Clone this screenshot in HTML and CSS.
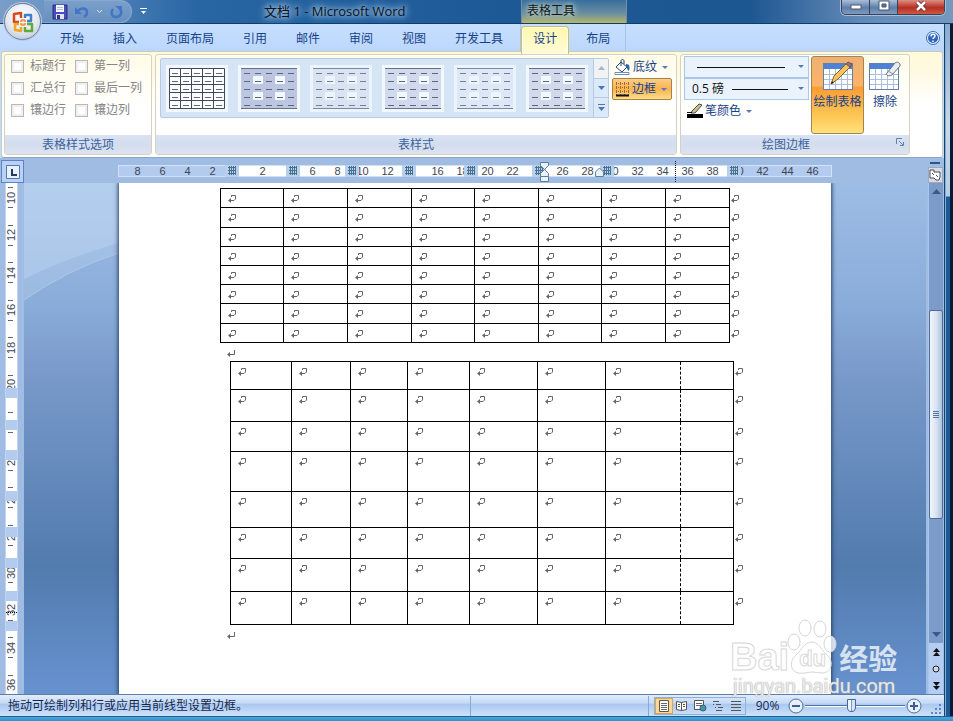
FILE: index.html
```html
<!DOCTYPE html>
<html lang="zh-CN">
<head>
<meta charset="utf-8">
<title>文档 1 - Microsoft Word</title>
<link rel="stylesheet" href="styles.css">
</head>
<body>
<svg class="defs" aria-hidden="true">
  <defs>
    <symbol id="cell-mark" viewBox="0 0 8 8"><path d="M3.500 2V.5h4V4L6 5.500H1" /><path d="M0 5.500L3 3v5z" fill="#666" stroke="none" /></symbol>
    <symbol id="para-mark" viewBox="0 0 8 8"><path d="M7.500 1v4.500H1" /><path d="M0 5.500L3 3v5z" fill="#666" stroke="none" /></symbol>
    <symbol id="grip" viewBox="0 0 8 9"><path d="M1.500 0v9M3.500 0v9M5.500 0v9M7.500 0v9M0 1.500h8M0 4.500h8M0 7.500h8" stroke="#47718c" stroke-width="1" /></symbol>
    <pattern id="dash-cells" width="11" height="8" patternUnits="userSpaceOnUse"><path d="M3 5.500h6" stroke="#5b6980" /></pattern>
    <symbol id="style-grid" viewBox="0 0 56 41">
      <rect width="56" height="41" fill="#fff" /><rect width="56" height="41" fill="url(#dash-cells)" />
      <path d="M.5 .5h55v40H.5zM11.500 0v41M22.500 0v41M33.500 0v41M44.500 0v41M0 8.500h56M0 16.500h56M0 24.500h56M0 32.500h56" fill="none" stroke="#3d4a5c" />
    </symbol>
    <symbol id="style-band" viewBox="0 0 56 41">
      <rect width="56" height="41" fill="currentColor" />
      <path d="M12 8h10v8H12zM34 8h10v8H34zM12 24h10v8H12zM34 24h10v8H34z" fill="#f2f8ff" />
      <rect width="56" height="41" fill="url(#dash-cells)" />
      <path d="M0 .5h56M0 40.500h56" stroke="#65728c" />
    </symbol>
    <symbol id="table-pic" viewBox="0 0 30 27">
      <rect x=".5" y=".5" width="29" height="26" fill="#fff" stroke="#5f7fae" />
      <rect x="1" y="1" width="28" height="5" fill="#4e82d6" />
      <path d="M6.500 6v20M12.500 6v20M18.500 6v20M24.500 6v20M1 11.500h28M1 16.500h28M1 21.500h28" stroke="#a9bfdf" />
    </symbol>
  </defs>
</svg>

<header class="titlebar">
  <div class="quick">
    <button aria-label="保存"><svg width="16" height="16" viewBox="0 0 16 16"><path d="M1 1h14v14H1z" fill="#4a4db5" stroke="#2b2d7c" /><path d="M4 1h8v7H4z" fill="#f3f6ff" /><path d="M5 3.500h6M5 5.500h6" stroke="#b5bde0" /><path d="M4 10h8v5H4z" fill="#dfe3f5" /><path d="M5 11h3v4H5z" fill="#333689" /></svg></button>
    <button aria-label="撤消"><svg width="16" height="14" viewBox="0 0 16 14"><path d="M4 6c3-4 9-3 9 1 0 2-1 4-3 5" fill="none" stroke="#4474c8" stroke-width="2.500" /><path d="M1 2v7h7z" fill="#4474c8" /></svg></button>
    <svg class="chev" width="7" height="5" viewBox="0 0 7 5"><path d="M1 1l2.500 2.500L6 1" fill="none" stroke="#dce9f8" /></svg>
    <button aria-label="重复"><svg width="15" height="14" viewBox="0 0 15 14"><path d="M4 4c-3 4-1 8 3 8s7-4 4-8" fill="none" stroke="#4474c8" stroke-width="2.500" /><path d="M6 1h7v6z" fill="#4474c8" /></svg></button>
  </div>
  <button class="customize" aria-label="自定义快速访问工具栏"><svg width="7" height="7" viewBox="0 0 7 7"><path d="M0 .5h7" stroke="#fff" /><path d="M1 3h5L3.500 6z" fill="#fff" /></svg></button>
  <h1>文档 1 - Microsoft Word</h1>
  <div class="context-title">表格工具</div>
  <div class="window-buttons">
    <button aria-label="最小化"><svg width="12" height="12"><path d="M1 5h10v4H1z" fill="#fff" stroke="#4b5870" /></svg></button>
    <button aria-label="还原"><svg width="12" height="12"><path d="M1 1h10v9H1z" fill="#fff" stroke="#4b5870" /><path d="M4 4h4v3H4z" fill="#53749c" stroke="#4b5870" /></svg></button>
    <button class="close" aria-label="关闭"><svg width="14" height="12" viewBox="0 0 14 12"><path d="M3 2l8 8M11 2l-8 8" stroke="#5b2328" stroke-width="4" /><path d="M3 2l8 8M11 2l-8 8" stroke="#fff" stroke-width="2.500" /></svg></button>
  </div>
</header>
<button class="office" aria-label="Office 按钮"><svg width="24" height="24" viewBox="0 0 24 24" fill="none" stroke-width="2.500" stroke-linejoin="round"><path d="M10 8V3L3 4v8h5" stroke="#d9481c" /><path d="M14 8V5h6v6h-4" stroke="#3f80c9" /><path d="M8 14H4v6l6 1v-4" stroke="#f2a51d" /><path d="M16 14h5v7h-7v-4" stroke="#62a83b" /><path d="M9 11h2V9M13 9v2h2M9 14h2v2M15 14h-2v2" stroke="#ee8a35" stroke-width="1.500" /></svg></button>

<div class="frame">
<main>
  <nav class="tabs">
    <button>开始</button><button>插入</button><button>页面布局</button><button>引用</button><button>邮件</button><button>审阅</button><button>视图</button><button>开发工具</button>
    <div class="context-tabs"><button class="active">设计</button><button>布局</button></div>
    <button class="help" aria-label="帮助"><svg width="14" height="14" viewBox="0 0 14 14"><circle cx="7" cy="7" r="6.500" fill="#e8f1fd" stroke="#3d6db5" /><circle cx="7" cy="7" r="5" fill="#2c66bd" /><path d="M5 5.500c0-3 4-3 4-.5 0 1.500-2 1.500-2 3M7 9.500v1.500" fill="none" stroke="#fff" stroke-width="1.500" /></svg></button>
  </nav>

  <div class="ribbon">
    <section class="group options">
      <div class="group-body checks">
        <label><input type="checkbox">标题行</label><label><input type="checkbox">第一列</label>
        <label><input type="checkbox">汇总行</label><label><input type="checkbox">最后一列</label>
        <label><input type="checkbox">镶边行</label><label><input type="checkbox">镶边列</label>
      </div>
      <h2>表格样式选项</h2>
    </section>
    <section class="group styles">
      <div class="group-body">
        <div class="gallery">
          <button class="thumb" aria-label="网格"><svg><use href="#style-grid" /></svg></button>
          <button class="thumb t1" aria-label="样式 1"><svg><use href="#style-band" /></svg></button>
          <button class="thumb t2" aria-label="样式 2"><svg><use href="#style-band" /></svg></button>
          <button class="thumb t3" aria-label="样式 3"><svg><use href="#style-band" /></svg></button>
          <button class="thumb t4" aria-label="样式 4"><svg><use href="#style-band" /></svg></button>
          <button class="thumb t5" aria-label="样式 5"><svg><use href="#style-band" /></svg></button>
          <div class="gallery-scroll">
            <button class="off" aria-label="上一行"><svg width="7" height="4"><path d="M0 4h7L3.500 0z" fill="#aab4c2" /></svg></button>
            <button aria-label="下一行"><svg width="7" height="4"><path d="M0 0h7L3.500 4z" fill="#4b77b5" /></svg></button>
            <button aria-label="其他"><svg width="7" height="7"><path d="M0 .5h7" stroke="#4b77b5" /><path d="M0 3h7L3.500 7z" fill="#4b77b5" /></svg></button>
          </div>
        </div>
        <div class="stack">
          <button class="small"><svg width="17" height="17" viewBox="0 0 17 17"><path d="M1 13.500h14v2H1z" fill="#fff" stroke="#6e8fbd" /><path d="M7 3l6 5-5 5-6-5z" fill="#fff" stroke="#28466f" /><path d="M7 7V2c0-2 3-2 3 0v3" fill="none" stroke="#28466f" /><path d="M12 5c4 0 4 3 3 7-2-1-2-3-3-5z" fill="#2c68b4" /></svg><span>底纹</span><i class="drop"></i></button>
          <button class="small hot"><svg width="15" height="15" viewBox="0 0 15 15"><path d="M1.500 0v13M5.500 0v13M9.500 0v13M13.500 0v13M1 1.500h13M1 5.500h13M1 9.500h13" stroke="#9c6a30" stroke-dasharray="1 1" /><path d="M1 13.500h13" stroke="#111" stroke-width="2" /></svg><span>边框</span><i class="drop"></i></button>
        </div>
      </div>
      <h2>表样式</h2>
    </section>
    <section class="group borders">
      <div class="group-body">
        <div class="stack pens">
          <label class="pick"><select aria-label="笔样式"><option></option></select><span class="rule wide"></span><i class="drop"></i></label>
          <label class="pick"><select aria-label="笔划粗细"><option>0.5 磅</option></select><span class="rule"></span><i class="drop"></i></label>
          <button class="small"><svg width="17" height="16" viewBox="0 0 17 16"><path d="M1 11h16v4H1z" fill="#000" /><path d="M6 8l7-7 3 1-7 8H5z" fill="#c9c293" stroke="#4d4d42" /><path d="M1 9.500h5" stroke="#111" /></svg><span>笔颜色</span><i class="drop"></i></button>
        </div>
        <button class="large hot"><svg width="30" height="33" viewBox="0 0 30 33"><use href="#table-pic" y="5" width="30" height="27" /><path d="M8 26l3-8L24 5l4 3L15 21z" fill="#f4c35c" stroke="#85612c" /><path d="M23 6l2-2 4 2-2 3z" fill="#a66f65" stroke="#76504a" /><path d="M8 26l1-3 2 2z" fill="#222" /></svg><span>绘制表格</span></button>
        <button class="large"><svg width="32" height="33" viewBox="0 0 32 33"><use href="#table-pic" y="5" width="30" height="27" /><path d="M18 15L26 5c2-2 6 0 5 3l-8 9c-3 2-7 0-5-2z" fill="#e9edf2" stroke="#68727f" /><path d="M19 13l5 3" stroke="#8c96a3" /></svg><span>擦除</span></button>
      </div>
      <h2>绘图边框</h2>
      <button class="launcher" aria-label="边框和底纹"><svg width="8" height="8" viewBox="0 0 8 8"><path d="M.5 6V.5H6M3 3l4 4M7.500 4v3.500H4" fill="none" stroke="#6380a9" /></svg></button>
    </section>
  </div>

  <div class="workspace">
    <button class="tab-stop" aria-label="制表符"><svg width="14" height="14" viewBox="0 0 14 14"><path d="M.5 .5h13v13H.5z" fill="#e8f0fb" stroke="#5877b1" /><path d="M6 4v6h5" fill="none" stroke="#27395c" stroke-width="2" /></svg></button>
    <div class="hruler-row">
      <div class="hruler" id="hruler"></div>
    </div>
    <div class="split">
      <span class="split-bar"></span>
      <button aria-label="标尺"><svg width="12" height="12" viewBox="0 0 12 12"><path d="M1 1h4v2h6v5l-1 3H7L5 9H1z" fill="#fff" stroke="#4a4f5a" /><path d="M3 4l2 2M7 6l2 2" stroke="#4a4f5a" /></svg></button>
    </div>
    <div class="vruler" id="vruler"></div>
    <div class="canvas">
      <svg class="waves" viewBox="0 0 95 120" preserveAspectRatio="none"><path d="M0 0h95v60Q45 74 0 96z" fill="#d2e6fa" opacity=".25" /><path d="M0 0h95v70Q45 86 0 117z" fill="#cfe2f7" opacity=".25" /><path d="M0 117Q45 86 95 70" fill="none" stroke="#b6cfec" opacity=".7" /></svg>
      <article class="page">
        <table class="first" id="first"></table>
        <p><svg class="mark"><use href="#para-mark" /></svg></p>
        <table class="second" id="second"></table>
        <p><svg class="mark"><use href="#para-mark" /></svg></p>
      </article>
    </div>
    <div class="vscroll">
      <button aria-label="向上"><svg width="9" height="5"><path d="M0 5h9L4.500 0z" fill="#3b5a8c" /></svg></button>
      <div class="track"><div class="handle"></div></div>
      <button aria-label="向下"><svg width="9" height="5"><path d="M0 0h9L4.500 5z" fill="#3b5a8c" /></svg></button>
      <div class="browse">
        <button aria-label="前一页"><svg width="7" height="8"><path d="M0 4h7L3.500 0zM0 8h7L3.500 4z" fill="#111" /></svg></button>
        <button aria-label="选择浏览对象"><svg width="8" height="8"><circle cx="4" cy="4" r="3" fill="#cfdae8" stroke="#222" /></svg></button>
        <button aria-label="下一页"><svg width="7" height="8"><path d="M0 0h7L3.500 4zM0 4h7L3.500 8z" fill="#111" /></svg></button>
      </div>
    </div>
  </div>

  <footer class="status">
    <span class="message">拖动可绘制列和行或应用当前线型设置边框。</span>
    <div class="views">
      <button class="on" aria-label="页面视图"><svg width="12" height="12"><path d="M1.500 .5h9v11h-9z" fill="#fff" stroke="#555" /><path d="M3 3.500h6M3 5.500h6M3 7.500h6M3 9.500h6" stroke="#666" /></svg></button>
      <button aria-label="阅读版式"><svg width="12" height="12"><path d="M.5 1.500l5 1 5-1v8l-5 1-5-1zM5.500 2v9" fill="#fff" stroke="#555" /><path d="M2 4.500h2M2 6.500h2M7 4.500h2M7 6.500h2" stroke="#555" /></svg></button>
      <button aria-label="Web 版式"><svg width="13" height="12"><path d="M.5 .5h9v9h-9z" fill="#fff" stroke="#555" /><path d="M2 3.500h6M2 5.500h6" stroke="#666" /><circle cx="9" cy="8" r="3" fill="#4a93a0" stroke="#31607e" /></svg></button>
      <button aria-label="大纲"><svg width="12" height="12"><path d="M1 1.500h6M4 4.500h5M6 7.500h5M4 10.500h6M1 4.500h1M3 7.500h1" stroke="#555" /></svg></button>
      <button aria-label="草稿"><svg width="12" height="12"><path d="M1 1.500h10M1 4.500h10M1 7.500h10M1 10.500h10" stroke="#555" /></svg></button>
    </div>
    <button class="percent">90%</button>
    <button class="round" aria-label="缩小"><svg width="16" height="16" viewBox="0 0 16 16"><circle cx="8" cy="8" r="7" fill="#e6effb" stroke="#526f9e" /><path d="M4 8h8" stroke="#3e5c90" stroke-width="2" /></svg></button>
    <input type="range" min="0" max="100" value="46" aria-label="显示比例">
    <button class="round" aria-label="放大"><svg width="16" height="16" viewBox="0 0 16 16"><circle cx="8" cy="8" r="7" fill="#e6effb" stroke="#526f9e" /><path d="M4 8h8M8 4v8" stroke="#3e5c90" stroke-width="2" /></svg></button>
    <svg class="size-grip" width="12" height="12"><path d="M8 1h2v2H8zM4 5h2v2H4zM8 5h2v2H8zM0 9h2v2H0zM4 9h2v2H4zM8 9h2v2H8z" fill="#5f84bd" /></svg>
  </footer>
</main>
<div class="edge"></div>
</div>
<div class="taskbar"></div>

<div class="watermark">
  <div class="brand"><span class="latin">Bai</span>
    <span class="paw"><svg viewBox="0 0 50 56"><g class="shape"><ellipse cx="7" cy="23" rx="6" ry="8" /><ellipse cx="18" cy="9" rx="6" ry="8" /><ellipse cx="33" cy="10" rx="6" ry="8" /><ellipse cx="43" cy="25" rx="6" ry="8" /><path d="M25 23c7 0 9 8 15 13 7 6 5 17-4 18-4 0-7-1-11-1s-8 2-13 1C3 53 2 42 9 36c6-5 8-13 16-13z" /></g></svg><b>du</b></span>
    <span class="hanzi">经验</span></div>
  <div class="site">jingyan.baidu.com</div>
</div>
<script src="app.js"></script>
</body>
</html>
```
FILE: styles.css
```css
* { box-sizing: border-box; }
body {
  margin: 0;
  height: 100vh;
  display: flex;
  flex-direction: column;
  overflow: hidden;
  position: relative;
  font: 12px/16px "Open Sans", "Noto Sans CJK SC", sans-serif;
  color: #15428b;
  background: #1d5a96;
}
button, select { font: inherit; color: inherit; border: 0; padding: 0; margin: 0; background: none; }
button { display: flex; align-items: center; justify-content: center; white-space: nowrap; }
svg { display: block; flex: none; }
.defs { position: absolute; width: 0; height: 0; }

.titlebar {
  flex: 0 0 24px;
  display: flex;
  align-items: flex-start;
  position: relative;
  padding: 0 8px 0 44px;
  border-bottom: 1px solid #0f3c6c;
  background: linear-gradient(90deg, #789dc8 0, #6c95c4 50px, #3b73ae 150px, #2765a3 200px, #1d5995 500px, #1d5791 750px, #6289b7 860px, #7698bd 100%);
}
.quick {
  display: flex;
  align-items: center;
  gap: 6px;
  width: 88px;
  height: 23px;
  padding-left: 8px;
  border: 1px solid #86a8cf;
  border-width: 1px 1px 1px 0;
  border-radius: 0 12px 12px 0;
  background: linear-gradient(#7b9fca, #6790c0);
}
.customize { width: 22px; height: 23px; }
h1 {
  margin: 0 0 0 110px;
  width: 146px;
  font: 13px/22px "Open Sans", "Noto Sans CJK SC", sans-serif;
  color: #0c1420;
  white-space: nowrap;
  text-shadow: 0 0 5px #a9c6e6, 0 0 8px #a9c6e6, 0 0 10px #a9c6e6;
}
.context-title {
  margin-left: 111px;
  width: 106px;
  height: 23px;
  padding-left: 5px;
  line-height: 22px;
  color: #10151a;
  border-left: 1px solid #718fa5;
  border-right: 1px solid #718fa5;
  background: linear-gradient(#376e9f, #6b909e 60%, #b9b766);
  text-shadow: 0 0 5px #d4e1d2, 0 0 8px #d4e1d2;
}
.window-buttons {
  display: flex;
  margin-left: auto;
  height: 15px;
  border: 1px solid #34435b;
  border-top: 0;
  border-radius: 0 0 5px 5px;
  box-shadow: 0 0 0 1px #a9bdd6;
  overflow: hidden;
}
.window-buttons button { width: 28px; padding-bottom: 3px; background: linear-gradient(#a9bed8, #5d7ea8 55%, #7d9cc2); border-right: 1px solid #34435b; }
.window-buttons .close { width: 46px; border: 0; background: linear-gradient(#dd8f83, #b52f24 55%, #d2583e); }
.office {
  position: absolute;
  left: 4px;
  top: 3px;
  z-index: 2;
  width: 37px;
  height: 37px;
  border-radius: 50%;
  border: 1px solid #7183a0;
  background: radial-gradient(circle at 50% 35%, #fff, #e3e8f0 55%, #a9b7cc);
  box-shadow: 0 0 0 1px #b6cbe5;
}

.frame { flex: 1; min-height: 0; display: flex; }
main { flex: 1; min-width: 0; display: flex; flex-direction: column; background: #bfdbff; }
.edge {
  flex: 0 0 9px;
  border-left: 1px solid #15406f;
  border-right: 3px solid #061c38;
  background: linear-gradient(90deg, #82acd3 1px, transparent 1px), linear-gradient(#8babcf 0, #c9d8e7 100px, #b6cfe2 172px, #1c5995 173px);
}
.taskbar { flex: 0 0 5px; background: linear-gradient(#235c92 1px, #4aa7db 1px, #3194d0); }

.tabs { flex: 0 0 27px; min-height: 0; display: flex; gap: 5px; padding: 0 4px 0 48px; background: linear-gradient(#c7dfff, #bcd7fc); }
.tabs button { height: 28px; padding: 1px 12px 0; }
.context-tabs { display: flex; gap: 5px; height: 27px; padding: 2px 3px 0 0; border: 1px solid #a9c4e4; border-width: 0 1px; }
.context-tabs button { height: 26px; padding-bottom: 1px; }
.tabs .active { position: relative; z-index: 1; height: 28px; border: 1px solid #cbbf75; border-bottom: 0; border-radius: 4px 4px 0 0; padding: 0 11px 4px; background: linear-gradient(#fff8b0, #fffbd6); box-shadow: inset 0 0 0 1px #fffde8; }
.tabs .help { margin-left: auto; padding: 0; }

.ribbon {
  flex: 0 0 107px;
  display: flex;
  gap: 3px;
  padding: 2px 1px 2px 2px;
  margin: 0 1px;
  border: 1px solid #c9cbc0;
  border-bottom-color: #8ba6ca;
  border-radius: 3px;
  background: linear-gradient(#fffbd8, #fff9e3 20%, #fff 50%);
}
.group {
  position: relative;
  display: flex;
  flex-direction: column;
  border: 1px solid #d5d2c2;
  border-radius: 3px;
  background: linear-gradient(#fffbe4, #fffdf2 20%, #fff 60%);
  box-shadow: inset 0 0 0 1px #fffef7;
}
.options { width: 148px; }
.styles { width: 522px; }
.borders { width: 230px; }
.group-body { flex: 1; display: flex; }
.group h2 { flex: 0 0 19px; margin: 0; font: inherit; line-height: 19px; text-align: center; color: #3b62a0; background: linear-gradient(#d9e3f4, #d3dded 50%, #dde3ef); }
.borders h2 { padding-right: 18px; }
.checks { display: grid; grid-template-columns: 64px 1fr; grid-auto-rows: 22px; padding: 0 0 0 6px; color: #858585; }
.checks label { display: flex; align-items: center; gap: 6px; white-space: nowrap; }
.checks input { appearance: none; width: 13px; height: 13px; margin: 0; border: 1px solid #b8b8b8; background: #fff; box-shadow: inset 0 0 0 2px #f0f0f0; }
.styles .group-body { padding: 3px 4px 0; gap: 3px; }
.gallery { display: flex; height: 60px; border: 1px solid #b5cce4; background: #d5e5f6; border-radius: 2px; }
.thumb { flex: 0 0 72px; }
.thumb svg { width: 62px; height: 47px; padding: 3px; background: #f1f8ff; }
.t1 { color: #bcc6e0; }
.t2 { color: #dbe3f2; }
.t3 { color: #d1daec; }
.t4 { color: #e1e8f6; }
.t5 { color: #d1d9ea; }
.t2, .t4 { opacity: 0.8; }
.gallery-scroll { display: flex; flex-direction: column; width: 15px; border-left: 1px solid #b5cce4; }
.gallery-scroll button { flex: 1; border-bottom: 1px solid #b5cce4; background: #dce9f8; }
.gallery-scroll button:last-child { border: 0; }
.gallery-scroll .off { background: #f1f2f4; }
.stack { display: flex; flex-direction: column; }
.small { height: 22px; gap: 2px; padding: 0 4px 0 2px; }
.styles .small { width: 60px; }
.drop { width: 0; height: 0; border: 3px solid transparent; border-top-color: #5b7bb0; border-bottom: 0; margin-left: 3px; }
.styles .stack { margin-top: -2px; }
.small.hot { border: 1px solid #a98246; border-radius: 2px; background: linear-gradient(#fbcd86, #f8b350 50%, #fddd88); }
.borders .group-body { padding: 1px 4px 0 3px; gap: 2px; }
.pens { flex: 0 0 125px; }
.pick { position: relative; display: flex; align-items: center; height: 22px; border: 1px solid #abc7e8; background: #eaf2fc; }
.pick select { appearance: none; flex: 1; width: 100%; height: 20px; padding: 0 7px; color: #111; }
.pick .drop { position: absolute; right: 4px; top: 8px; pointer-events: none; }
.rule { position: absolute; left: 47px; right: 20px; top: 10px; height: 1px; background: #111; pointer-events: none; }
.rule.wide { left: 12px; right: 23px; }
.pens .small { align-self: flex-start; }
.large { flex: 0 0 53px; height: 78px; flex-direction: column; justify-content: flex-start; gap: 3px; border: 1px solid transparent; border-radius: 3px; }
.large + .large { flex-basis: 38px; }
.large svg { margin-top: 1px; }
.large.hot { border-color: #a48353; background: linear-gradient(#eeb173, #fcb367 38%, #fb9c34 40%, #fdca58 80%, #ffe17e); }
.launcher { position: absolute; right: 5px; bottom: 8px; width: 8px; height: 8px; }

.workspace { flex: 1; min-height: 0; display: grid; grid-template: 25px minmax(0, 1fr) / 24px minmax(0, 1fr) 18px; background: #a0bce2; }
.tab-stop { width: 23px; height: 23px; margin: 2px 0 0 1px; border: 1px solid #5e82c4; background: #b9d1f5; }
.hruler-row { display: flex; justify-content: center; padding-top: 7px; }
.hruler {
  position: relative;
  flex: 0 0 714px;
  height: 12px;
  display: flex;
  padding-left: 6px;
  border: 1px solid #d0e1f8;
  background: linear-gradient(90deg, #b2cbee 120px, #fff 120px, #fff 608px, #b2cbee 608px);
  font: 11px/10px "Liberation Sans", sans-serif;
  color: #3f4753;
}
.hruler .num { flex: 0 0 25px; text-align: center; }
.hruler .stop { position: absolute; top: -1px; width: 14px; height: 12px; padding: 1px 3px; background: #b9cfee; }
.hruler .stop svg { width: 8px; height: 9px; }
.guide { position: absolute; left: 556px; top: -5px; height: 23px; border-left: 1px dotted #111; }
.indent { position: absolute; left: 421px; top: -4px; }
.indent-right { position: absolute; left: 476px; top: 1px; }
.split { display: flex; flex-direction: column; align-items: center; gap: 3px; padding-top: 4px; }
.split-bar { width: 10px; height: 2px; background: #2e5390; }
.split button { width: 15px; height: 16px; background: #d5dce7; border: 1px solid #9fa9ba; }
.vruler { position: relative; display: flex; flex-direction: column; align-items: center; overflow: hidden; margin: 0 5px; border: 1px solid #bfd4f0; border-width: 0 1px; width: 13px; background: #fff; font: 11px/11px "Liberation Sans", sans-serif; color: #3f4753; }
.vruler-num { flex: 0 0 37px; width: 11px; display: flex; align-items: center; justify-content: center; writing-mode: vertical-rl; transform: rotate(180deg); background: linear-gradient(#666, #666) 4px 8px / 5px 1px no-repeat, linear-gradient(#666, #666) 4px 28px / 5px 1px no-repeat; }
.vruler-num:nth-child(even) { flex-basis: 38px; }
.vruler-num:first-child { margin-top: -4px; }
.vruler .block { position: absolute; left: 0; right: 0; height: 10px; background: #b2cbee; }
.vguide { position: absolute; left: 0; right: 0; top: 429px; border-top: 1px dotted #111; }
.canvas { position: relative; overflow: hidden; display: flex; justify-content: center; background: linear-gradient(#9dbde6, #8aacd9 24%, #7899ca 38%, #527bae 75%, #6692cf); }
.waves { position: absolute; left: 0; top: 0; width: 95px; height: 120px; }
.page { position: relative; flex: 0 0 712px; padding: 5px 0 0 101px; background: #fff; box-shadow: 0 0 4px 1px #263e62; }
.page p { margin: 0; height: 18px; padding: 6px 0 0 7px; }
.mark { width: 8px; height: 8px; fill: none; stroke: #666; }
table { border-collapse: collapse; table-layout: fixed; }
td { position: relative; padding: 0 0 0 7px; border: 1px solid #000; vertical-align: top; }
td .mark { margin-top: 6px; }
td .end { position: absolute; right: -10px; top: 0; }
.first { width: 510px; height: 155px; }
.second { width: 504px; margin-left: 10px; }
.second td:nth-child(7) { border-right: 1px dashed #000; }
.second td:nth-child(8) { border-left: 1px dashed #000; }
.vscroll { display: flex; flex-direction: column; margin: 0 1px 0 2px; background: #7c9bc9; border-left: 1px solid #a9c6ee; }
.vscroll button { width: 100%; height: 17px; }
.track { flex: 1; display: grid; grid-template-rows: 110fr 209fr 107fr; }
.handle { grid-row: 2; border: 1px solid #516b93; border-radius: 2px; background: linear-gradient(90deg, #f0f5fc, #dbe5f3 50%, #adc1dd); position: relative; }
.handle::after { content: ""; position: absolute; left: 3px; right: 3px; top: 50%; height: 7px; margin-top: -4px; background: repeating-linear-gradient(#54719f 0 1px, transparent 1px 2px); }
.browse { background: #b5cdf2; }

.status { flex: 0 0 22px; display: flex; align-items: center; padding-right: 1px; color: #12284f; border-top: 1px solid #5d7da9; background: linear-gradient(#e2edfb, #c3d9f6 40%, #a9c7ef 42%, #cfe2fa); }
.message { flex: 1; padding-left: 8px; line-height: 20px; background: linear-gradient(#86a9d8, #86a9d8) 470px 0 / 1px 100% no-repeat; }
.views { display: flex; margin-right: 8px; border: 1px solid #92afd8; position: relative; }
.views::before { content: ""; position: absolute; left: -7px; top: -2px; height: 20px; border-left: 1px solid #86a9d8; }
.views button { width: 18px; height: 16px; }
.views .on { background: #ffd891; box-shadow: inset 0 0 0 1px #d4a55a; }
.percent { font-size: 12px; width: 27px; margin-right: 6px; }
.round { width: 18px; height: 18px; }
.status input { appearance: none; width: 100px; height: 18px; margin: 0; background: linear-gradient(#54749f, #54749f) 0 8px / 100% 1px no-repeat, linear-gradient(#fff, #fff) 0 9px / 100% 1px no-repeat; }
.status input::-webkit-slider-thumb { appearance: none; width: 9px; height: 13px; border: 1px solid #4b6690; border-radius: 1px 1px 5px 5px; background: linear-gradient(90deg, #eef5ff 3px, #7c9cc8 3px, #7c9cc8 4px, #d4e3f7 4px); }
.size-grip { margin: 6px 0 0 8px; }

.watermark { position: absolute; right: 52px; bottom: 24px; width: 171px; color: rgba(255, 255, 255, 0.75); pointer-events: none; }
.brand { display: flex; align-items: flex-end; height: 56px; -webkit-text-stroke: 1px rgba(205, 205, 205, 0.8); }
.latin { font: bold 38px/36px "Liberation Sans", sans-serif; }
.paw { position: relative; width: 50px; height: 56px; margin-left: -2px; }
.paw .shape { fill: rgba(255, 255, 255, 0.75); stroke: #d6d6d6; }
.paw b { position: absolute; left: 12px; top: 28px; font: bold 22px/24px "Liberation Sans", sans-serif; }
.hanzi { margin-left: 2px; font: bold 29px/36px "Noto Sans CJK SC", sans-serif; -webkit-text-stroke: 0; }
.site { padding-left: 3px; font: 20px/22px Roboto, sans-serif; text-shadow: 0 0 1px #a5a5a5, 0 0 1px #b5b5b5; }
```
FILE: app.js
```js
const mark = '<svg class="mark"><use href="#cell-mark"/></svg>';
const endMark = '<svg class="mark end"><use href="#cell-mark"/></svg>';

function fillTable(id, widths, heights, emptyLast) {
  const cols = widths.map(w => `<col style="width:${w}px">`).join('');
  const rows = heights.map(h => '<tr>' + widths.map((w, i) => {
    const last = i === widths.length - 1;
    return `<td style="height:${h}px">${last && emptyLast ? '' : mark}${last ? endMark : ''}</td>`;
  }).join('') + '</tr>').join('');
  document.getElementById(id).innerHTML = `<colgroup>${cols}</colgroup><tbody>${rows}</tbody>`;
}
fillTable('first', [63, 64, 64, 63, 64, 63, 64, 64], [19, 20, 19, 19, 19, 19, 20, 19], false);
fillTable('second', [61, 59, 57, 62, 68, 68, 75, 53], [28, 32, 30, 40, 36, 31, 33, 33], true);

const scale = [8, 6, 4, 2, '', 2, '', 6, 8, 10, 12, '', 16, 18, 20, 22, '', 26, 28, 30, 32, 34, 36, 38, 40, 42, 44, 46];
const stops = [106, 167, 226, 283, 345, 413, 481, 608];
document.getElementById('hruler').innerHTML =
  scale.map(n => `<span class="num">${n}</span>`).join('') +
  stops.map(x => `<span class="stop" style="left:${x}px"><svg><use href="#grip"/></svg></span>`).join('') +
  '<svg class="indent" width="9" height="20" viewBox="0 0 9 20"><path d="M.5 .5h8v3l-4 4-4-4zM4.500 7.500l4 4v3h-8v-3zM.5 14.500h8v5h-8z" fill="#e9f1f7" stroke="#5c7f99"/></svg>' +
  '<svg class="indent-right" width="10" height="10" viewBox="0 0 10 10"><path d="M.5 9.500V5l4-4 4 4v4.500z" fill="#e9f1f7" stroke="#5c7f99"/></svg>' +
  '<span class="guide"></span>';

const vertical = [10, 12, 14, 16, 18, 20, '', 24, 26, 28, 30, 32, 34, 36];
const blocks = [205, 237, 267, 308, 344, 375, 408, 438];
document.getElementById('vruler').innerHTML =
  vertical.map(n => `<span class="vruler-num">${n}</span>`).join('') +
  blocks.map(y => `<span class="block" style="top:${y}px"></span>`).join('') +
  '<span class="vguide"></span>';
```
